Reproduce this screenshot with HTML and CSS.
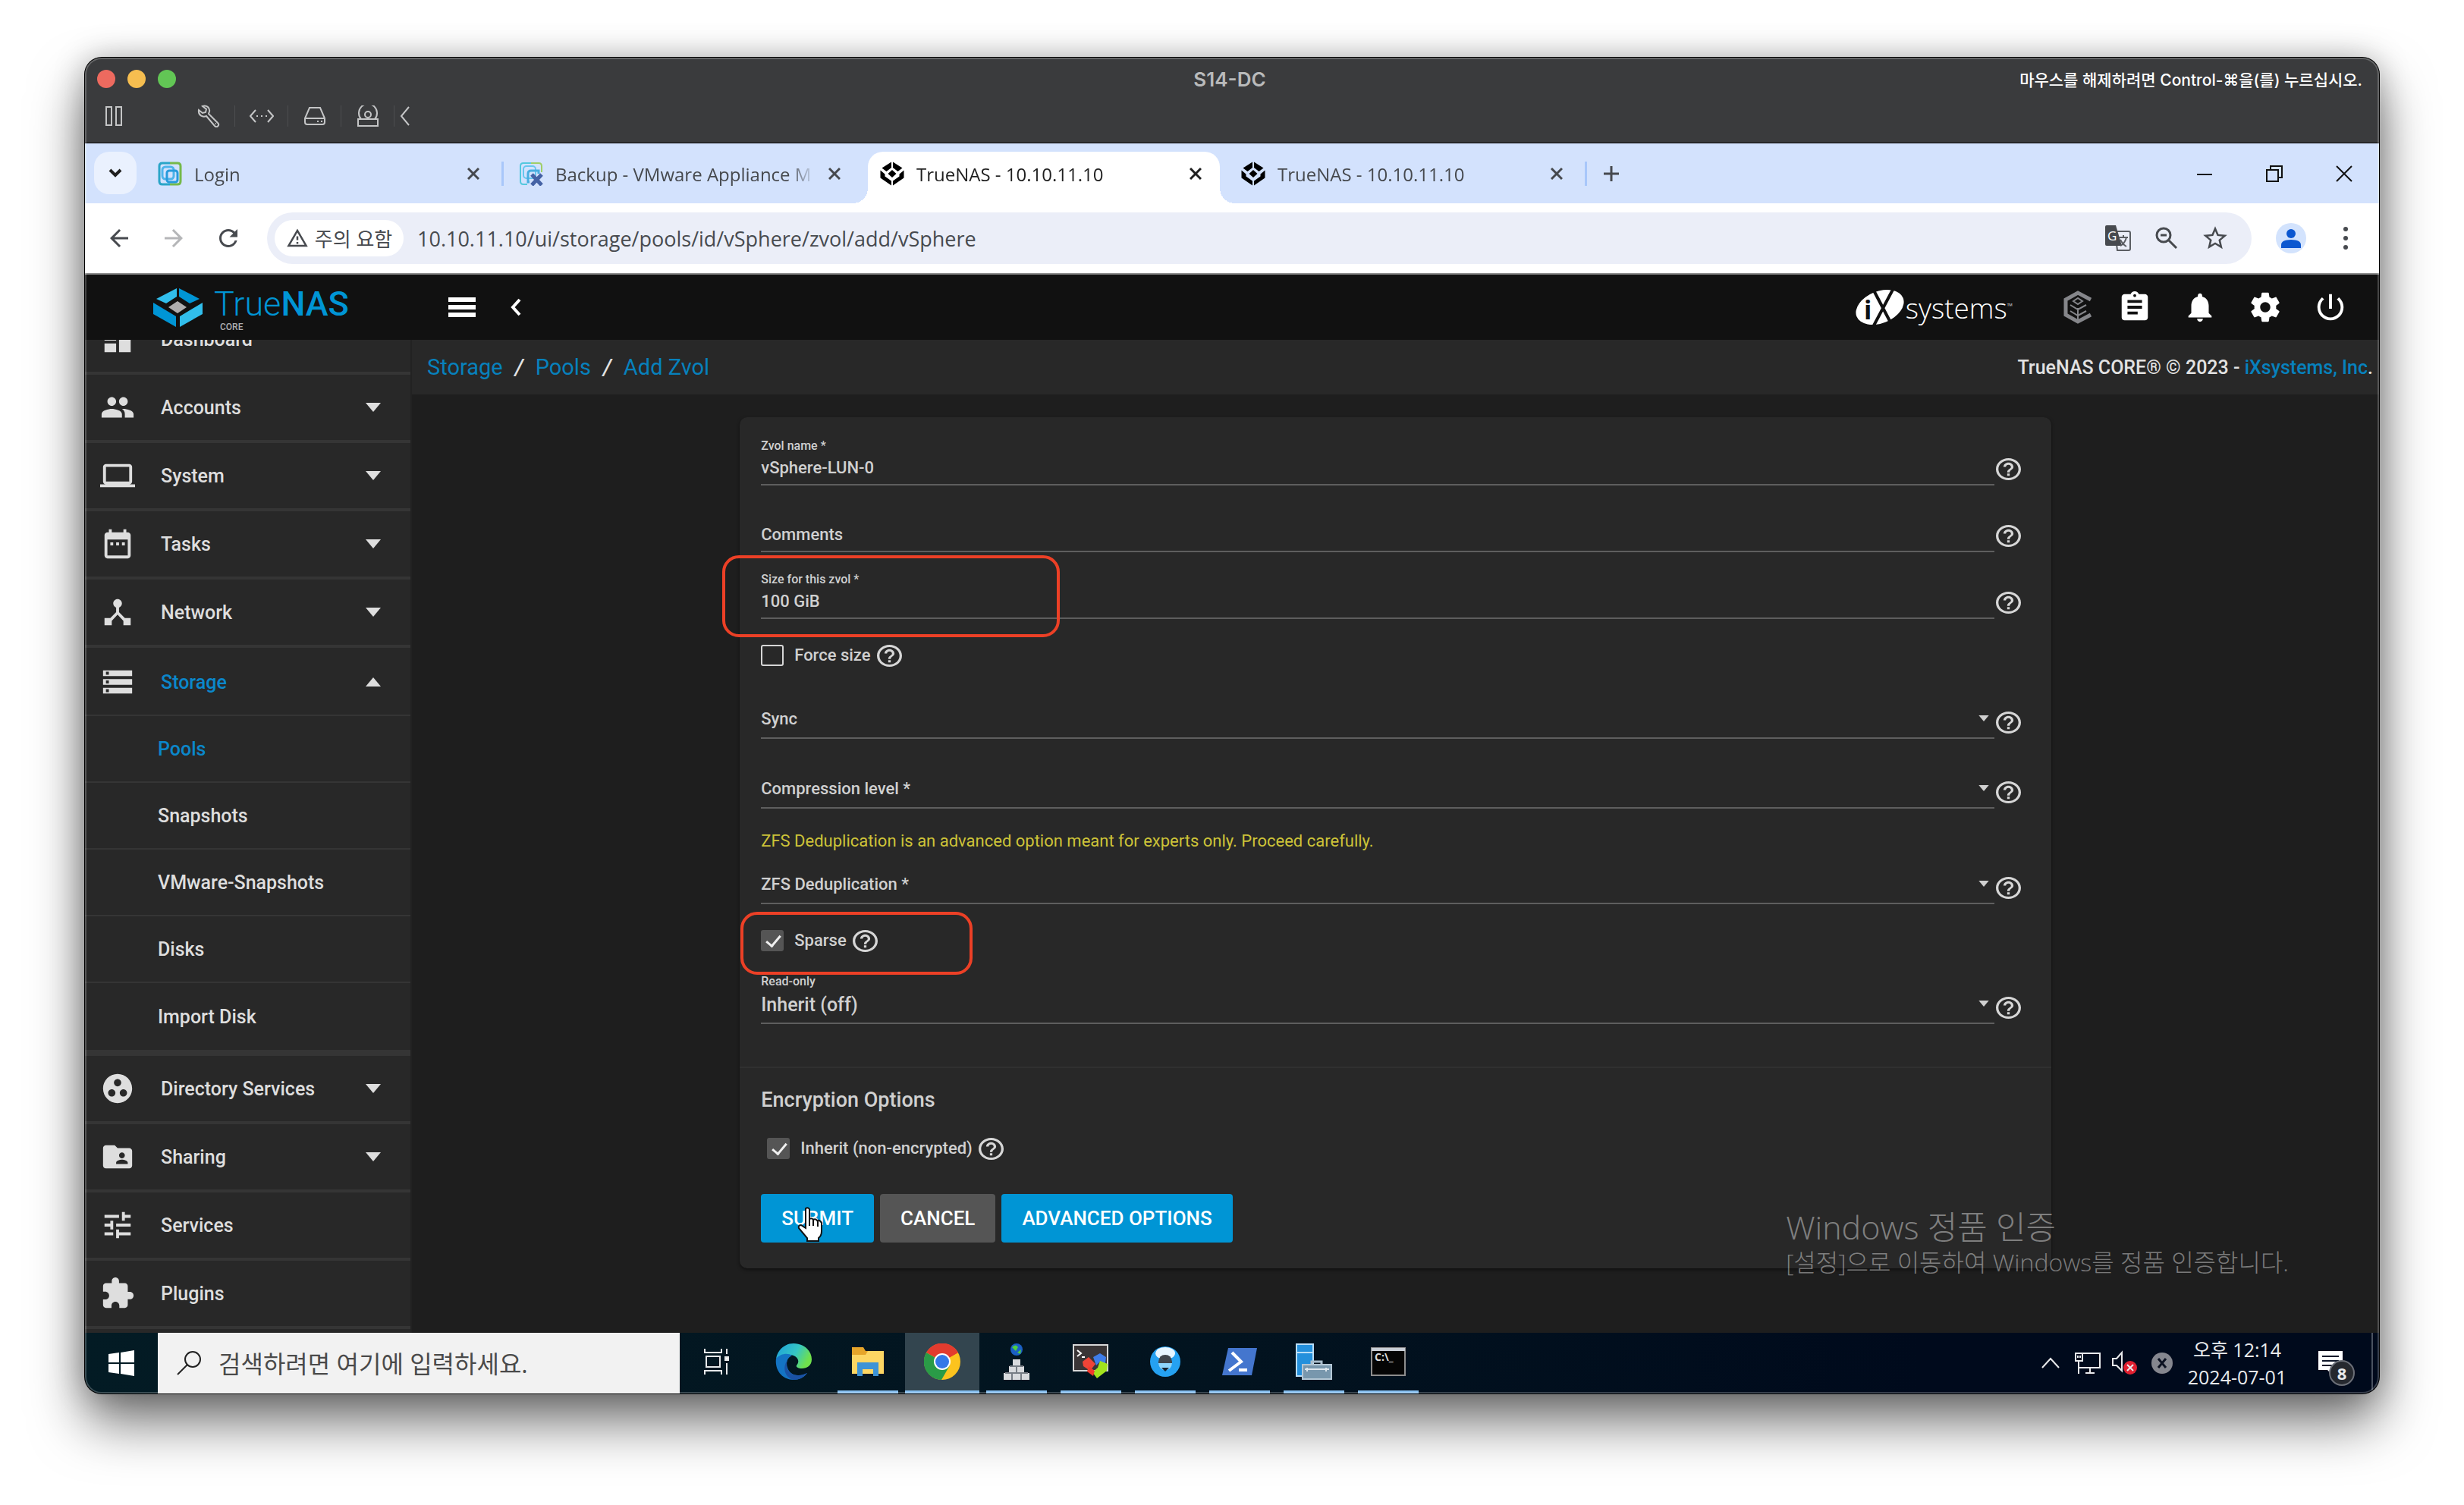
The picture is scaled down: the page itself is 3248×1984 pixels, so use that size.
FILE: index.html
```html
<!DOCTYPE html>
<html lang="ko">
<head>
    <meta charset="UTF-8">
    <meta name="viewport" content="width=device-width, initial-scale=1.0">
    <title>S14-DC</title>
    <link rel="stylesheet" href="styles.css">
</head>
<body>
    <!-- shared icons -->
    <svg class="defs" aria-hidden="true">
        <symbol id="help" viewBox="2 2 20 20" preserveAspectRatio="none"><path d="M11 18h2v-2h-2v2zm1-16C6.48 2 2 6.48 2 12s4.48 10 10 10 10-4.480 10-10S17.520 2 12 2zm0 18c-4.410 0-8-3.590-8-8s3.590-8 8-8 8 3.590 8 8-3.590 8-8 8zm0-14c-2.210 0-4 1.790-4 4h2c0-1.100.9-2 2-2s2 .9 2 2c0 2-3 1.750-3 5h2c0-2.250 3-2.500 3-5 0-2.210-1.790-4-4-4z"/></symbol>
        <symbol id="down" viewBox="0 0 20 12"><path d="M0 0h20L10 12z"/></symbol>
        <symbol id="up" viewBox="0 0 20 12"><path d="M0 12h20L10 0z"/></symbol>
        <symbol id="close" viewBox="0 0 16 16"><path d="M1 1l14 14M15 1L1 15" fill="none" stroke="currentColor" stroke-width="3"/></symbol>
        <symbol id="cube" viewBox="0 0 64 64"><path d="M30 1v15L17 26 5 17zM34 1v15l13 10 12-9zM32 22l11 10-11 10-11-10zM1 23l12 10v6l17 12v12L1 43zM63 23L51 33v6L34 51v12l29-20z"/></symbol>
    </svg>

    <div class="window">
        <header class="titlebar">
            <div class="title-row">
                <div class="lights"><button class="red" aria-label="Close"></button><button class="yellow" aria-label="Minimize"></button><button class="green" aria-label="Zoom"></button></div>
                <h1>S14-DC</h1>
                <p>마우스를 해제하려면 Control-⌘을(를) 누르십시오.</p>
            </div>
            <div class="tools">
                <button class="pause" aria-label="Pause"><svg width="22" height="26" viewBox="0 0 22 26"><path d="M1 1h7v24H1zM14 1h7v24h-7z"/></svg></button>
                <button aria-label="Settings"><svg width="30" height="30" viewBox="0 0 30 30"><path d="M7 2c5-2 10 2 9 7l-1 3 12 12c3 3-1 7-4 4L12 15c-5 2-11-1-10-8l5 4 4-1 1-4z"/><path d="M24 25h1"/></svg></button>
                <button aria-label="Network"><svg width="32" height="18" viewBox="0 0 32 18"><path d="M8 1L1 9l7 8M24 1l7 8-7 8M9 9h2M15 9h2M21 9h2"/></svg></button>
                <button aria-label="Hard disk"><svg width="28" height="24" viewBox="0 0 28 24"><path d="M7 1h14l6 14v5q0 3-3 3H4q-3 0-3-3v-5zM1 15h26M17 19h2M22 19h2"/></svg></button>
                <button aria-label="CD drive"><svg width="28" height="28" viewBox="0 0 28 28"><path d="M5 18a12 12 0 1 1 18 0M1 18h26v9H1z"/><circle cx="14" cy="12" r="4"/></svg></button>
                <button class="collapse" aria-label="Collapse"><svg width="14" height="26" viewBox="0 0 14 26"><path d="M12 1L2 13l10 12"/></svg></button>
            </div>
        </header>

        <!-- browser -->
        <div class="tabstrip">
            <button class="tab-search" aria-label="Search tabs"><svg width="18" height="12" viewBox="0 0 18 12"><path d="M2 2l7 7 7-7" fill="none" stroke="currentColor" stroke-width="4"/></svg></button>
            <div class="tab line">
                <svg width="32" height="32" viewBox="0 0 32 32" fill="none" stroke-width="3"><path d="M16 2H6Q2 2 2 6v20q0 4 4 4h10" stroke="#2aa5c8"/><path d="M16 2h10q4 0 4 4v20q0 4-4 4H16" stroke="#75b94a"/><rect x="6" y="7" width="15" height="16" rx="4" stroke="#4eb4ea"/><rect x="12" y="12" width="14" height="15" rx="3" stroke="#279bdc"/></svg>
                <a href="#">Login</a>
                <button aria-label="Close tab"><svg width="16" height="16"><use href="#close"/></svg></button>
            </div>
            <div class="tab">
                <svg width="32" height="32" viewBox="0 0 32 32" fill="none" stroke-width="2"><path d="M16 2H6Q2 2 2 6v20q0 4 4 4h5" stroke="#54c8de"/><path d="M16 2h10q4 0 4 4v8" stroke="#9fce68"/><rect x="6" y="6" width="16" height="16" rx="4" stroke="#68c6ee"/><path d="M14 27h-2v-11q0-4 4-4h10v4" stroke="#49aee0" stroke-width="3"/><path d="M17 17l13 14M30 17L17 31" stroke="#4562a5" stroke-width="5"/></svg>
                <a href="#">Backup - VMware Appliance M</a>
                <button aria-label="Close tab"><svg width="16" height="16"><use href="#close"/></svg></button>
            </div>
            <div class="tab active">
                <svg width="32" height="32"><use href="#cube"/></svg>
                <a href="#">TrueNAS - 10.10.11.10</a>
                <button aria-label="Close tab"><svg width="16" height="16"><use href="#close"/></svg></button>
            </div>
            <div class="tab line">
                <svg width="32" height="32"><use href="#cube"/></svg>
                <a href="#">TrueNAS - 10.10.11.10</a>
                <button aria-label="Close tab"><svg width="16" height="16"><use href="#close"/></svg></button>
            </div>
            <button class="new-tab" aria-label="New tab"><svg width="22" height="22" viewBox="0 0 22 22"><path d="M11 1v20M1 11h20" stroke="currentColor" stroke-width="3"/></svg></button>
            <div class="win-controls">
                <button aria-label="Minimize"><svg width="20" height="20" viewBox="0 0 20 20"><path d="M0 11h20"/></svg></button>
                <button aria-label="Restore"><svg width="22" height="22" viewBox="0 0 22 22"><path d="M1 6h15v15H1zM6 6V1h15v15h-5"/></svg></button>
                <button aria-label="Close"><svg width="22" height="22" viewBox="0 0 22 22"><path d="M1 1l20 20M21 1L1 21"/></svg></button>
            </div>
        </div>

        <div class="toolbar">
            <button aria-label="Back"><svg width="36" height="36" viewBox="0 0 24 24"><path d="M20 11H7.830l5.590-5.590L12 4l-8 8 8 8 1.410-1.410L7.830 13H20v-2z"/></svg></button>
            <button class="off" aria-label="Forward"><svg width="36" height="36" viewBox="0 0 24 24"><path d="M4 11h12.170l-5.590-5.590L12 4l8 8-8 8-1.410-1.410L16.170 13H4v-2z"/></svg></button>
            <button aria-label="Reload"><svg width="36" height="36" viewBox="0 0 24 24"><path d="M17.650 6.350C16.200 4.900 14.210 4 12 4c-4.420 0-7.990 3.580-7.990 8s3.570 8 7.990 8c3.730 0 6.840-2.550 7.730-6h-2.080c-.82 2.330-3.040 4-5.650 4-3.310 0-6-2.690-6-6s2.690-6 6-6c1.660 0 3.140.69 4.220 1.780L13 11h7V4l-2.350 2.350z"/></svg></button>
            <div class="omnibox">
                <button class="chip"><svg width="30" height="30" viewBox="0 0 24 24"><path d="M12 5.990L19.530 19H4.470L12 5.990M12 2L1 21h22L12 2zm1 14h-2v2h2v-2zm0-6h-2v4h2v-4z"/></svg>주의 요함</button>
                <input type="text" aria-label="Address" value="10.10.11.10/ui/storage/pools/id/vSphere/zvol/add/vSphere">
                <button aria-label="Translate"><svg width="36" height="36" viewBox="0 0 36 36"><path d="M14 9h18q2 0 2 2v21q0 2-2 2H17z" fill="none" stroke="#5b5e63" stroke-width="2"/><path d="M3 1h12l8 27H3q-2 0-2-2V3q0-2 2-2z"/><path d="M19 17h12M25 14v3M29 17q-2 8-8 11M21 20q3 6 8 9" fill="none" stroke="#5b5e63" stroke-width="2"/><text x="4" y="21" font-size="17" fill="#fff">G</text></svg></button>
                <button aria-label="Zoom"><svg width="30" height="30" viewBox="0 0 30 30"><path d="M18 18l10 10M7 11h8" stroke="currentColor" stroke-width="3"/><circle cx="11" cy="11" r="9" fill="none" stroke="currentColor" stroke-width="3"/></svg></button>
                <button aria-label="Bookmark"><svg width="38" height="38" viewBox="0 0 24 24"><path d="M22 9.240l-7.190-.62L12 2 9.190 8.630 2 9.240l5.460 4.730L5.820 21 12 17.270 18.180 21l-1.630-7.030L22 9.240zM12 15.400l-3.760 2.270 1-4.280-3.320-2.880 4.380-.38L12 6.100l1.710 4.040 4.380.38-3.320 2.880 1 4.280L12 15.400z"/></svg></button>
            </div>
            <button class="avatar" aria-label="Profile"><svg width="26" height="26" viewBox="0 0 26 26"><circle cx="13" cy="7" r="6"/><path d="M0 26v-4q0-7 13-7t13 7v4z"/></svg></button>
            <button class="more" aria-label="Menu"><svg width="6" height="30" viewBox="0 0 6 30"><circle cx="3" cy="3" r="3"/><circle cx="3" cy="15" r="3"/><circle cx="3" cy="27" r="3"/></svg></button>
        </div>

        <!-- TrueNAS -->
        <div class="nas-header">
            <a class="logo" href="#">
                <svg width="65" height="51" viewBox="0 0 65 51"><path d="M31 0v11L17 20 4 14z" fill="#31beec"/><path d="M34 0v11l14 9 13-6z" fill="#0095d5"/><path d="M0 19l30 18v14L0 34z" fill="#0095d5"/><path d="M65 19L35 37v14l30-17z" fill="#31beec"/><path d="M32 17l12 8-12 8-12-8z" fill="#aeadae"/></svg>
                <span class="logo-text"><span>True<b>NAS</b></span><small>CORE</small></span>
            </a>
            <button class="menu" aria-label="Toggle menu"><svg width="36" height="26" viewBox="0 0 36 26"><path d="M0 0h36v6H0zM0 10h36v6H0zM0 20h36v6H0z"/></svg></button>
            <button class="mini" aria-label="Collapse menu"><svg width="16" height="24" viewBox="0 0 16 24"><path d="M13 2L4 12l9 10" fill="none" stroke="currentColor" stroke-width="4"/></svg></button>
            <a class="ix" href="#">
                <svg width="64" height="48" viewBox="0 0 64 48"><ellipse cx="32" cy="24" rx="33" ry="21" transform="rotate(-22 32 24)"/><path d="M24 2l22 42M50 -1L23 50" stroke="#111" stroke-width="4"/><text x="11" y="40" font-size="34" font-weight="bold" fill="#111">i</text></svg>
                <span>systems<sup>™</sup></span>
            </a>
            <button class="tc" aria-label="TrueCommand"><svg width="38" height="44" viewBox="0 0 38 44" fill="none" stroke="currentColor" stroke-width="5"><path d="M36 12L19 3 3 12v20l16 9 17-9"/><path d="M9 19l10 6 11-6M9 27l10 6 11-6M19 23v17M13 14l6-4 6 4-6 4z" stroke-width="2"/></svg></button>
            <button aria-label="Tasks"><svg width="46" height="46" viewBox="0 0 24 24"><path d="M19 3h-4.180C14.400 1.840 13.300 1 12 1c-1.300 0-2.400.84-2.820 2H5c-1.100 0-2 .9-2 2v14c0 1.100.9 2 2 2h14c1.100 0 2-.9 2-2V5c0-1.100-.9-2-2-2zm-7 0c.55 0 1 .45 1 1s-.45 1-1 1-1-.45-1-1 .45-1 1-1zm2 14H7v-2h7v2zm3-4H7v-2h10v2zm0-4H7V7h10v2z"/></svg></button>
            <button aria-label="Alerts"><svg width="46" height="46" viewBox="0 0 24 24"><path d="M12 22c1.100 0 2-.9 2-2h-4c0 1.100.89 2 2 2zm6-6v-5c0-3.070-1.640-5.640-4.500-6.320V4c0-.83-.67-1.500-1.500-1.500s-1.500.67-1.500 1.500v.68C7.630 5.360 6 7.920 6 11v5l-2 2v1h16v-1l-2-2z"/></svg></button>
            <button aria-label="Settings"><svg width="46" height="46" viewBox="0 0 24 24"><path d="M19.430 12.980c.04-.32.07-.64.07-.98s-.03-.66-.07-.98l2.110-1.650c.19-.15.24-.42.12-.64l-2-3.460c-.12-.22-.39-.3-.61-.22l-2.490 1c-.52-.4-1.080-.73-1.690-.98l-.38-2.650C14.460 2.180 14.250 2 14 2h-4c-.25 0-.46.18-.49.42l-.38 2.650c-.61.25-1.170.59-1.690.98l-2.490-1c-.23-.09-.49 0-.61.22l-2 3.460c-.13.22-.07.49.12.64l2.110 1.650c-.04.32-.07.65-.07.98s.03.66.07.98l-2.110 1.650c-.19.15-.24.42-.12.64l2 3.460c.12.22.39.3.61.22l2.490-1c.52.4 1.080.73 1.690.98l.38 2.650c.03.24.24.42.49.42h4c.25 0 .46-.18.49-.42l.38-2.650c.61-.25 1.170-.59 1.690-.98l2.490 1c.23.09.49 0 .61-.22l2-3.460c.12-.22.07-.49-.12-.64l-2.110-1.650zM12 15.500c-1.930 0-3.500-1.570-3.500-3.500s1.570-3.500 3.500-3.500 3.500 1.570 3.500 3.500-1.570 3.500-3.500 3.500z"/></svg></button>
            <button aria-label="Power"><svg width="46" height="46" viewBox="0 0 24 24"><path d="M13 3h-2v10h2V3zm4.830 2.170l-1.420 1.420C17.990 7.860 19 9.810 19 12c0 3.870-3.130 7-7 7s-7-3.130-7-7c0-2.190 1.010-4.140 2.580-5.420L6.170 5.170C4.230 6.820 3 9.260 3 12c0 4.970 4.030 9 9 9s9-4.030 9-9c0-2.740-1.230-5.180-3.170-6.830z"/></svg></button>
        </div>

        <div class="nas-body">
            <nav class="sidebar">
                <a class="item first" href="#"><svg class="ico" viewBox="0 0 24 24"><path d="M3 13h8V3H3v10zm0 8h8v-6H3v6zm10 0h8V11h-8v10zm0-18v6h8V3h-8z"/></svg><span>Dashboard</span></a>
                <button class="item"><svg class="ico" viewBox="0 0 24 24"><path d="M16 11c1.660 0 2.990-1.340 2.990-3S17.660 5 16 5c-1.660 0-3 1.340-3 3s1.340 3 3 3zm-8 0c1.660 0 2.990-1.340 2.990-3S9.660 5 8 5C6.340 5 5 6.340 5 8s1.340 3 3 3zm0 2c-2.330 0-7 1.170-7 3.500V19h14v-2.500c0-2.330-4.670-3.500-7-3.500zm8 0c-.29 0-.62.02-.97.05 1.160.84 1.970 1.970 1.970 3.450V19h6v-2.500c0-2.330-4.670-3.500-7-3.500z"/></svg><span>Accounts</span><svg class="caret"><use href="#down"/></svg></button>
                <button class="item"><svg class="ico" viewBox="0 0 24 24"><path d="M20 18c1.100 0 1.990-.9 1.990-2L22 6c0-1.100-.9-2-2-2H4c-1.100 0-2 .9-2 2v10c0 1.100.9 2 2 2H0v2h24v-2h-4zM4 6h16v10H4V6z"/></svg><span>System</span><svg class="caret"><use href="#down"/></svg></button>
                <button class="item"><svg class="ico" viewBox="0 0 24 24"><path d="M9 11H7v2h2v-2zm4 0h-2v2h2v-2zm4 0h-2v2h2v-2zm2-7h-1V2h-2v2H8V2H6v2H5c-1.110 0-1.990.9-1.990 2L3 20c0 1.100.89 2 2 2h14c1.100 0 2-.9 2-2V6c0-1.100-.9-2-2-2zm0 16H5V9h14v11z"/></svg><span>Tasks</span><svg class="caret"><use href="#down"/></svg></button>
                <button class="item"><svg class="ico" viewBox="0 0 24 24"><path d="M17 16l-4-4V8.820C14.160 8.400 15 7.300 15 6c0-1.660-1.340-3-3-3S9 4.340 9 6c0 1.300.84 2.400 2 2.820V12l-4 4H3v5h5v-3.050l4-4.200 4 4.200V21h5v-5h-4z"/></svg><span>Network</span><svg class="caret"><use href="#down"/></svg></button>
                <div class="group">
                    <button class="item current"><svg class="ico" viewBox="0 0 24 24"><path d="M2 20h20v-4H2v4zm2-3h2v2H4v-2zM2 4v4h20V4H2zm4 3H4V5h2v2zm-4 7h20v-4H2v4zm2-3h2v2H4v-2z"/></svg><span>Storage</span><svg class="caret"><use href="#up"/></svg></button>
                    <a class="sub current" href="#">Pools</a>
                    <a class="sub" href="#">Snapshots</a>
                    <a class="sub" href="#">VMware-Snapshots</a>
                    <a class="sub" href="#">Disks</a>
                    <a class="sub" href="#">Import Disk</a>
                </div>
                <button class="item"><svg class="ico" viewBox="0 0 24 24"><path d="M12 2C6.480 2 2 6.480 2 12s4.480 10 10 10 10-4.480 10-10S17.520 2 12 2zM8 17.500c-1.380 0-2.500-1.120-2.500-2.500s1.120-2.500 2.500-2.500 2.500 1.120 2.500 2.500-1.120 2.500-2.500 2.500zM9.500 8c0-1.380 1.120-2.500 2.500-2.500s2.500 1.120 2.500 2.500-1.120 2.500-2.500 2.500S9.500 9.380 9.500 8zm6.500 9.500c-1.380 0-2.500-1.120-2.500-2.500s1.120-2.500 2.500-2.500 2.500 1.120 2.500 2.500-1.120 2.500-2.500 2.500z"/></svg><span>Directory Services</span><svg class="caret"><use href="#down"/></svg></button>
                <button class="item"><svg class="ico" viewBox="0 0 24 24"><path d="M20 6h-8l-2-2H4c-1.100 0-1.990.9-1.990 2L2 18c0 1.100.9 2 2 2h16c1.100 0 2-.9 2-2V8c0-1.100-.9-2-2-2zm-5 3c1.100 0 2 .9 2 2s-.9 2-2 2-2-.9-2-2 .9-2 2-2zm4 8h-8v-1c0-1.330 2.670-2 4-2s4 .67 4 2v1z"/></svg><span>Sharing</span><svg class="caret"><use href="#down"/></svg></button>
                <a class="item" href="#"><svg class="ico" viewBox="0 0 24 24"><path d="M3 17v2h6v-2H3zM3 5v2h10V5H3zm10 16v-2h8v-2h-8v-2h-2v6h2zM7 9v2H3v2h4v2h2V9H7zm14 4v-2H11v2h10zm-6-4h2V7h4V5h-4V3h-2v6z"/></svg><span>Services</span></a>
                <a class="item" href="#"><svg class="ico" viewBox="0 0 24 24"><path d="M20.500 11H19V7c0-1.100-.9-2-2-2h-4V3.500C13 2.120 11.880 1 10.500 1S8 2.120 8 3.500V5H4c-1.100 0-1.990.9-1.990 2v3.800H3.500c1.490 0 2.700 1.210 2.700 2.700s-1.210 2.700-2.700 2.700H2V20c0 1.100.9 2 2 2h3.800v-1.500c0-1.490 1.210-2.700 2.700-2.700 1.490 0 2.700 1.210 2.700 2.700V22H17c1.100 0 2-.9 2-2v-4h1.500c1.380 0 2.500-1.120 2.500-2.500S21.880 11 20.500 11z"/></svg><span>Plugins</span></a>
            </nav>

            <main>
                <div class="crumbs">
                    <a href="#">Storage</a><i>/</i><a href="#">Pools</a><i>/</i><a href="#">Add Zvol</a>
                    <p>TrueNAS CORE® © 2023 - <a href="#">iXsystems, Inc</a>.</p>
                </div>

                <form class="card">
                    <div class="fields">
                        <div class="field">
                            <div class="control"><label for="name">Zvol name *</label><input type="text" id="name" value="vSphere-LUN-0"></div>
                            <svg class="help"><use href="#help"/></svg>
                        </div>
                        <div class="field empty">
                            <div class="control"><label for="comments">Comments</label><input type="text" id="comments"></div>
                            <svg class="help"><use href="#help"/></svg>
                        </div>
                        <div class="field">
                            <div class="control"><label for="size">Size for this zvol *</label><input type="text" id="size" value="100 GiB"></div>
                            <svg class="help"><use href="#help"/></svg>
                            <div class="mark mark-size"></div>
                        </div>
                        <div class="check">
                            <input type="checkbox" id="force"><label for="force">Force size</label><svg class="help"><use href="#help"/></svg>
                        </div>
                        <div class="field choice empty">
                            <div class="control"><label for="sync">Sync</label><select id="sync"><option></option></select><svg class="arrow"><use href="#down"/></svg></div>
                            <svg class="help"><use href="#help"/></svg>
                        </div>
                        <div class="field choice empty">
                            <div class="control"><label for="compression">Compression level *</label><select id="compression"><option></option></select><svg class="arrow"><use href="#down"/></svg></div>
                            <svg class="help"><use href="#help"/></svg>
                        </div>
                        <p class="warning">ZFS Deduplication is an advanced option meant for experts only. Proceed carefully.</p>
                        <div class="field choice empty compact">
                            <div class="control"><label for="dedup">ZFS Deduplication *</label><select id="dedup"><option></option></select><svg class="arrow"><use href="#down"/></svg></div>
                            <svg class="help"><use href="#help"/></svg>
                        </div>
                        <div class="check">
                            <input type="checkbox" id="sparse" checked><label for="sparse">Sparse</label><svg class="help"><use href="#help"/></svg>
                            <div class="mark mark-sparse"></div>
                        </div>
                        <div class="field choice">
                            <div class="control"><label for="readonly">Read-only</label><select id="readonly"><option>Inherit (off)</option></select><svg class="arrow"><use href="#down"/></svg></div>
                            <svg class="help"><use href="#help"/></svg>
                        </div>
                    </div>
                    <div class="encryption">
                        <h2>Encryption Options</h2>
                        <div class="check indent">
                            <input type="checkbox" id="inherit" checked><label for="inherit">Inherit (non-encrypted)</label><svg class="help"><use href="#help"/></svg>
                        </div>
                        <div class="actions">
                            <button type="button" class="primary">SUBMIT
                                <svg class="cursor" width="36" height="48" viewBox="0 0 36 48"><path d="M11 3q3-2 5 1v13q3-2 5 1 3-2 5 1 4-1 6 3v11q0 6-4 9v4H13v-4L2 29q-1-4 3-4l6 4z" fill="#fff" stroke="#111" stroke-width="2"/><path d="M16 17v9M21 18v8M27 20v7" stroke="#111" stroke-width="2"/></svg>
                            </button>
                            <button type="button">CANCEL</button>
                            <button type="button" class="primary">ADVANCED OPTIONS</button>
                        </div>
                    </div>
                </form>

                <div class="watermark"><strong>Windows 정품 인증</strong><span>[설정]으로 이동하여 Windows를 정품 인증합니다.</span></div>
            </main>
        </div>

        <!-- Windows taskbar -->
        <footer class="taskbar">
            <button class="start" aria-label="Start"><svg width="34" height="34" viewBox="0 0 34 34" fill="#fff"><path d="M0 5l14-2v13H0zM16 3l18-3v16H16zM0 18h14v13L0 29zM16 18h18v16l-18-3z"/></svg></button>
            <label class="search"><svg width="34" height="34" viewBox="0 0 34 34" fill="none" stroke="#222" stroke-width="2"><circle cx="22" cy="12" r="10"/><path d="M15 19L2 32"/></svg><input type="text" aria-label="Search" placeholder="검색하려면 여기에 입력하세요."></label>
            <button class="app taskview" aria-label="Task view"><svg width="34" height="36" viewBox="0 0 34 36" fill="none" stroke="#e6e9ea" stroke-width="2"><path d="M3 11h18v14H3zM1 1v5h22V1M1 35v-5h22v5M30 1v7M30 20v15"/><path d="M28 12h4v4h-4z" fill="#fff"/></svg></button>
            <button class="app" aria-label="Edge">
                <svg width="48" height="48" viewBox="0 0 48 48"><defs><linearGradient id="edge" x2="1" y2=".4"><stop stop-color="#1d9fdc"/><stop offset=".6" stop-color="#35c6c4"/><stop offset="1" stop-color="#6fe04c"/></linearGradient></defs><path d="M1 20C3 8 13 0 24 0c14 0 24 10 24 21 0 8-6 12-13 12-5 0-8-2-7-4 6-7-1-14-9-14C11 15 4 18 1 20z" fill="url(#edge)"/><path d="M1 20c6-7 16-8 21-4-7 3-8 10-6 16 3 9 14 14 26 7-4 6-11 9-18 9C9 48-1 35 1 20z" fill="#1474c4"/><path d="M16 22c-5 13 7 26 26 17-5 7-12 9-18 9-12-3-15-17-8-26z" fill="#1a52a5"/></svg>
            </button>
            <button class="app open" aria-label="File Explorer"><svg width="44" height="38" viewBox="0 0 44 38"><path d="M1 0h15l3 5h24v30H1z" fill="#e6a52a"/><path d="M1 10h18l3-5h21v30H1z" fill="#fdd663"/><path d="M8 38V20h28v18h-7v-9H15v9z" fill="#3d93d6"/></svg></button>
            <button class="app open active" aria-label="Chrome"><svg width="48" height="48" viewBox="0 0 48 48"><circle cx="24" cy="24" r="24" fill="#fcc31e"/><path d="M24 24L3 12A24 24 0 0 1 45 12z" fill="#e33b2e"/><path d="M3 12a24 24 0 0 0 20 36l11-19-10-5z" fill="#2a9b47"/><path d="M24 12h21L24 24z" fill="#e33b2e"/><circle cx="24" cy="24" r="11" fill="#fff"/><circle cx="24" cy="24" r="9" fill="#3478e8"/></svg></button>
            <button class="app open" aria-label="Network tool"><svg width="36" height="48" viewBox="0 0 36 48"><circle cx="18" cy="8" r="8" fill="#1b5fc4"/><path d="M12 5q5-5 8 0l-3 5zM19 12l5-4-1 6z" fill="#4fcf3f"/><path d="M13 21h10v9h5v9h7v9H1v-9h7v-9h5z" fill="#d8dadd"/><path d="M9 30h18M3 39h30M18 30v9M12 39v9M24 39v9" stroke="#777d85" stroke-width="2"/></svg></button>
            <button class="app open" aria-label="Terminal"><svg width="48" height="46" viewBox="0 0 48 46"><path d="M1 1h45v34H1z" fill="#3a3536" stroke="#d7d7d7" stroke-width="2"/><path d="M6 8l5 4-5 4M12 17h4" fill="none" stroke="#fff" stroke-width="2"/><path d="M13 23l8-6 9 9-7 9-9-6z" fill="#ef4437"/><path d="M27 17l9-5 8 5-1 9-7-3-5 5z" fill="#3f7de8"/><path d="M36 22l10 4-1 9-13 10-6-8 7-6z" fill="#a2e31d"/><path d="M21 29l8 6-2 7-8-6z" fill="#f13a2d"/></svg></button>
            <button class="app open" aria-label="Client"><svg width="40" height="40" viewBox="0 0 40 40"><circle cx="20" cy="20" r="20" fill="#25a1f1"/><ellipse cx="20" cy="9" rx="13" ry="8" fill="#e8f6ff"/><path d="M11 20q1-9 9-9t9 9v2H11z" fill="#40464c"/><path d="M11 22h18q-1 9-9 9t-9-9z" fill="#8fd6fb"/><path d="M15 28h10l-5 5z" fill="#152533"/></svg></button>
            <button class="app open" aria-label="PowerShell"><svg width="48" height="36" viewBox="0 0 48 36"><path d="M9 0h38l-7 36H1z" fill="#4476ce"/><path d="M14 6l12 12-16 12M23 29h11" fill="none" stroke="#fff" stroke-width="4"/></svg></button>
            <button class="app open" aria-label="Server Manager"><svg width="48" height="48" viewBox="0 0 48 48"><path d="M1 1h22v42H1z" fill="#2490dc" stroke="#b9def7" stroke-width="2"/><path d="M1 12h22" stroke="#b9def7" stroke-width="2"/><path d="M21 28v-4h13v4" fill="none" stroke="#a9bdcc" stroke-width="3"/><path d="M9 28h38v19H9z" fill="#7897ad" stroke="#b4c7d5" stroke-width="2"/><path d="M12 34h32M15 32v5M40 32v5" stroke="#dce6ed" stroke-width="2"/></svg></button>
            <button class="app open" aria-label="Command Prompt"><svg width="46" height="38" viewBox="0 0 46 38"><path d="M1 1h44v36H1z" fill="#050505" stroke="#8d8d8d" stroke-width="2"/><path d="M1 1h44v4H1z" fill="#c9ced6"/><text x="5" y="18" font-size="14" font-weight="bold" fill="#ddd">C:\_</text></svg></button>

            <div class="tray">
                <button aria-label="Hidden icons"><svg width="26" height="16" viewBox="0 0 26 16"><path d="M2 14L13 2l11 12"/></svg></button>
                <button aria-label="Network"><svg width="34" height="30" viewBox="0 0 34 30"><path d="M10 2h23v19H6M1 2h9v10H1zM5 12v17M14 28h12M20 21v7M4 5v3M7 5v3"/></svg></button>
                <button aria-label="Volume"><svg width="34" height="34" viewBox="0 0 34 34"><path d="M1 11h5l7-8v24l-7-7H1z"/><circle cx="24" cy="23" r="9" fill="#e02030" stroke="none"/><path d="M20 19l8 8M28 19l-8 8"/></svg></button>
                <button aria-label="Status"><svg width="30" height="30" viewBox="0 0 30 30"><circle cx="15" cy="15" r="14" fill="#85878f" stroke="none"/><path d="M10 9l10 12M20 9L10 21" stroke="#0c1222" stroke-width="3"/></svg></button>
                <time>오후 12:14<br>2024-07-01</time>
                <button class="notify" aria-label="Notifications"><svg width="34" height="34" viewBox="0 0 34 34"><path d="M1 1h32v25H20v7l-7-7H1z" fill="#fff" stroke="none"/><path d="M6 8h22M6 14h22M6 20h14" stroke="#10182a"/></svg><span>8</span></button>
            </div>
        </footer>
    </div>
</body>
</html>
```
FILE: styles.css
```css
* {
    box-sizing: border-box;
}
body {
    display: flex;
    min-height: 100vh;
    margin: 0;
    padding: 76px 112px 147px;
    background-color: #ffffff;
    font-family: Roboto, "Noto Sans CJK KR", sans-serif;
    overflow: hidden;
}
.defs {
    position: absolute;
    width: 0;
    height: 0;
}
h1, h2, p {
    margin: 0;
}
a {
    color: inherit;
    text-decoration: none;
}
button, input, select {
    margin: 0;
    padding: 0;
    border: none;
    outline: none;
    background: none;
    color: inherit;
    font: inherit;
}
button {
    display: flex;
    justify-content: center;
    align-items: center;
    cursor: pointer;
}
svg {
    flex: none;
}
svg:not([fill]) {
    fill: currentColor;
}
.window {
    position: relative;
    flex: 1;
    display: flex;
    flex-direction: column;
    min-width: 0;
    border-radius: 22px;
    overflow: hidden;
    background-color: #1e1e1e;
    box-shadow: 0 0 0 1px #000000, 0 0 40px rgba(0, 0, 0, 0.25), 0 38px 70px rgba(0, 0, 0, 0.55);
}
.window::after {
    content: "";
    position: absolute;
    inset: 0;
    border: 2px solid rgba(255, 255, 255, 0.22);
    border-radius: 22px;
    pointer-events: none;
}

/* title bar */
.titlebar {
    height: 113px;
    background-color: #3a3b3d;
    border-bottom: 1px solid #000000;
}
.title-row {
    display: grid;
    grid-template-columns: 1fr auto 1fr;
    align-items: center;
    height: 56px;
    padding: 0 22px 0 16px;
    font-family: Inter, "Noto Sans CJK KR", sans-serif;
}
.title-row h1 {
    color: #b9babb;
    font-size: 26px;
    font-weight: 600;
}
.title-row p {
    justify-self: end;
    color: #ffffff;
    font-size: 21px;
    font-weight: 500;
}
.lights {
    display: flex;
    gap: 16px;
}
.lights button {
    width: 24px;
    height: 24px;
    border-radius: 50%;
}
.red {
    background-color: #ed6a5f;
}
.yellow {
    background-color: #f6be50;
}
.green {
    background-color: #62c655;
}
.tools {
    display: flex;
    height: 42px;
    align-items: center;
    color: #c4c5c6;
}
.tools button {
    width: 70px;
    height: 28px;
    border-right: 1px solid #4c4d4f;
}
.tools .pause {
    width: 76px;
    margin-right: 52px;
    border: none;
}
.tools .collapse {
    width: 28px;
    border: none;
}
.tools svg {
    fill: none;
    stroke: currentColor;
    stroke-width: 2;
}

/* browser */
.tabstrip {
    display: flex;
    gap: 12px;
    height: 79px;
    padding: 11px 0 0 12px;
    background-color: #d3e2fd;
    color: #46494e;
    font-family: "Open Sans", "Noto Sans CJK KR", sans-serif;
    font-size: 24px;
}
.tab-search {
    width: 56px;
    height: 56px;
    border-radius: 20px;
    background-color: #eaf1fe;
    color: #1f1f1f;
}
.tab {
    position: relative;
    flex: 0 1 464px;
    display: flex;
    align-items: center;
    gap: 16px;
    min-width: 0;
    padding: 0 22px 10px 16px;
}
.tab a {
    flex: 1;
    overflow: hidden;
    white-space: nowrap;
    -webkit-mask-image: linear-gradient(to right, #000 90%, transparent);
    mask-image: linear-gradient(to right, #000 90%, transparent);
}
.tab button {
    width: 20px;
    height: 20px;
}
.tab > svg {
    color: #000000;
}
.tab.line::after {
    content: "";
    position: absolute;
    right: -8px;
    top: 13px;
    width: 3px;
    height: 32px;
    background-color: #a8c7fa;
}
.tab.active {
    border-radius: 20px 20px 0 0;
    background-color: #ffffff;
    color: #1f1f1f;
}
.tab.active::before, .tab.active::after {
    content: "";
    position: absolute;
    bottom: 0;
    width: 20px;
    height: 20px;
}
.tab.active::before {
    left: -20px;
    background: radial-gradient(circle at top left, transparent 20px, #ffffff 20px);
}
.tab.active::after {
    right: -20px;
    background: radial-gradient(circle at top right, transparent 20px, #ffffff 20px);
}
.new-tab {
    width: 56px;
    height: 58px;
}
.win-controls {
    display: flex;
    margin-left: auto;
}
.win-controls button {
    width: 92px;
    height: 58px;
}
.win-controls svg {
    fill: none;
    stroke: #111111;
    stroke-width: 2;
}
.toolbar {
    display: flex;
    align-items: center;
    height: 94px;
    padding: 0 26px 0 9px;
    border-bottom: 2px solid #8c8c8c;
    background-color: #ffffff;
    color: #474a4f;
    font-family: "Open Sans", "Noto Sans CJK KR", sans-serif;
}
.toolbar button {
    width: 72px;
    height: 48px;
}
.toolbar .off {
    color: #b5b6b8;
}
.omnibox {
    flex: 1;
    display: flex;
    align-items: center;
    height: 68px;
    margin-left: 15px;
    padding: 0 16px 0 10px;
    border-radius: 34px;
    background-color: #ebeef8;
}
.omnibox button {
    width: 64px;
}
.omnibox .chip {
    gap: 8px;
    width: 170px;
    border-radius: 24px;
    background-color: #ffffff;
    font-size: 26px;
}
.omnibox input {
    flex: 1;
    margin-left: 18px;
    font-size: 27px;
}
.toolbar .avatar {
    width: 40px;
    height: 40px;
    margin-left: 32px;
    border-radius: 50%;
    background-color: #d3e3fd;
    color: #0b57d0;
}
.toolbar .more {
    width: 36px;
    margin-left: 34px;
}

/* TrueNAS header */
.nas-header {
    display: flex;
    align-items: center;
    height: 86px;
    padding-right: 21px;
    background-color: #111111;
    color: #ffffff;
}
.nas-header button {
    width: 86px;
    height: 86px;
}
.logo {
    display: flex;
    align-items: center;
    gap: 15px;
    width: 431px;
    padding-left: 90px;
    color: #0095d5;
}
.logo-text {
    display: flex;
    flex-direction: column;
    padding-top: 4px;
    font-size: 45px;
    font-weight: 300;
    line-height: 48px;
}
.logo-text b {
    font-weight: 500;
}
.logo-text small {
    padding-left: 8px;
    color: #aeadae;
    font-size: 12px;
    font-weight: 500;
    line-height: 12px;
}
.nas-header .menu {
    margin-left: 23px;
}
.nas-header .mini {
    width: 56px;
}
.ix {
    display: flex;
    align-items: center;
    gap: 2px;
    margin-left: auto;
    margin-right: 54px;
    font-family: "Open Sans", sans-serif;
    font-size: 37px;
    font-weight: 300;
}
.ix sup {
    font-size: 10px;
}
.nas-header .tc {
    width: 64px;
    color: #85868a;
}

/* sidebar */
.nas-body {
    flex: 1;
    display: flex;
    min-height: 0;
}
.sidebar {
    width: 431px;
    overflow: hidden;
    border-right: 2px solid #222222;
    background-color: #282828;
    color: #dedede;
    font-size: 25px;
    font-weight: 500;
}
.item {
    display: flex;
    justify-content: flex-start;
    align-items: center;
    width: 100%;
    height: 90px;
    padding: 0 39px 0 20px;
    border-bottom: 4px solid #353535;
}
.item.first {
    margin-top: -44px;
}
.item span {
    flex: 1;
    padding-left: 34px;
    text-align: left;
}
.ico {
    width: 46px;
    height: 46px;
}
.caret {
    width: 20px;
    height: 12px;
}
.group {
    padding-top: 2px;
    border-bottom: 8px solid #353535;
}
.group .item {
    height: 88px;
    border-bottom-width: 2px;
}
.sub {
    display: flex;
    align-items: center;
    height: 88px;
    padding-left: 96px;
    border-bottom: 2px solid #353535;
}
.sub:last-child {
    border-bottom: none;
}
.current span, .sub.current {
    color: #0b87cb;
}

/* page */
main {
    position: relative;
    flex: 1;
    display: flex;
    flex-direction: column;
    align-items: center;
    min-width: 0;
    color: #d0d0d0;
}
.crumbs {
    display: flex;
    align-items: center;
    width: 100%;
    height: 72px;
    padding: 0 8px 0 20px;
    background-color: #282828;
    color: #e2e2e2;
    font-size: 29px;
}
.crumbs a {
    color: #0781bd;
}
.crumbs i {
    padding: 0 16px;
    font-weight: 500;
}
.crumbs p {
    margin-left: auto;
    font-size: 25px;
    font-weight: 500;
}
.card {
    width: 66.66%;
    margin-top: 30px;
    border-radius: 10px;
    background-color: #282828;
    box-shadow: 0 2px 4px rgba(0, 0, 0, 0.5);
    font-size: 22px;
    font-weight: 500;
}
.fields {
    padding: 2px 40px 56px 28px;
    border-bottom: 2px solid #303030;
}
.field {
    position: relative;
    display: flex;
    gap: 2px;
}
.control {
    flex: 1;
    display: grid;
    grid-template-rows: 22px 36px;
    align-items: center;
    padding: 24px 0 4px;
    border-bottom: 2px solid #5e5e5e;
}
.control label {
    grid-area: 1 / 1;
    font-size: 16px;
}
.control input, .control select {
    grid-area: 2 / 1;
    width: 100%;
    height: 36px;
}
.empty .control label {
    grid-area: 2 / 1;
    font-size: 22px;
}
.choice .control {
    grid-template-rows: 22px 38px;
    padding-bottom: 6px;
}
.choice select {
    appearance: none;
    padding-top: 2px;
    font-size: 25px;
}
.compact .control {
    padding-top: 0;
}
.arrow {
    grid-area: 2 / 1;
    justify-self: end;
    width: 16px;
    height: 8px;
    margin-right: 6px;
    pointer-events: none;
}
.help {
    width: 33px;
    height: 29px;
    color: #d6d6d6;
}
.field .help {
    align-self: flex-end;
    margin-bottom: 7px;
}
.check {
    position: relative;
    display: flex;
    align-items: center;
    height: 66px;
    padding-top: 30px;
}
.check input {
    appearance: none;
    width: 30px;
    height: 28px;
    border: 2px solid #d6d6d6;
    border-radius: 3px;
}
.check input:checked {
    border-color: #555555;
    background-color: #555555;
}
.check input:checked::after {
    content: "";
    display: block;
    width: 8px;
    height: 16px;
    margin: 1px 0 0 9px;
    border: solid #f0f0f0;
    border-width: 0 3px 3px 0;
    transform: rotate(40deg);
}
.check label {
    padding: 0 8px 2px 14px;
}
.indent {
    padding-left: 8px;
}
.warning {
    padding-top: 28px;
    color: #cdc338;
    font-weight: 400;
    line-height: 30px;
}
/* red annotation boxes */
.mark {
    position: absolute;
    border: 4px solid #ec4026;
    border-radius: 22px;
    pointer-events: none;
}
.mark-size {
    left: -51px;
    top: 4px;
    width: 445px;
    height: 108px;
}
.mark-sparse {
    left: -27px;
    top: 10px;
    width: 306px;
    height: 83px;
}
.encryption {
    padding: 26px 28px 34px;
}
.encryption h2 {
    font-size: 27px;
    font-weight: 500;
    line-height: 32px;
}
.actions {
    display: flex;
    gap: 8px;
    margin-top: 42px;
}
.actions button {
    position: relative;
    height: 64px;
    padding: 0 27px;
    border-radius: 4px;
    background-color: #555555;
    color: #ffffff;
    font-size: 26px;
}
.actions .primary {
    background-color: #0095d5;
}
.cursor {
    position: absolute;
    left: 48px;
    top: 16px;
}
.watermark {
    position: absolute;
    right: 119px;
    bottom: 72px;
    display: flex;
    flex-direction: column;
    color: rgba(255, 255, 255, 0.42);
    font-family: "Open Sans", "Noto Sans CJK KR", sans-serif;
    font-size: 32px;
    font-weight: 300;
    line-height: 42px;
}
.watermark strong {
    font-size: 43px;
    font-weight: 300;
    line-height: 50px;
}

/* taskbar */
.taskbar {
    display: flex;
    height: 80px;
    background: linear-gradient(to right, #031b24, #02131f 50%, #000a1c 80%);
    color: #e8eaec;
    font-family: "Open Sans", "Noto Sans CJK KR", sans-serif;
}
.start {
    width: 96px;
}
.search {
    display: flex;
    align-items: center;
    gap: 22px;
    width: 688px;
    padding-left: 24px;
    background-color: #f2f2f2;
    font-size: 32px;
}
.search input {
    flex: 1;
}
.search input::placeholder {
    color: #4a4a4a;
}
.app {
    width: 98px;
    border-bottom: 4px solid transparent;
}
.taskview {
    width: 101px;
    padding-right: 4px;
}
.open {
    width: 80px;
    margin: 0 9px;
    border-color: #86bff0;
}
.open.active {
    width: 98px;
    margin: 0;
    background-color: #33454f;
}
.tray {
    display: flex;
    align-items: center;
    margin-left: auto;
    margin-right: 8px;
    border-right: 2px solid #4a5261;
}
.tray button {
    width: 49px;
}
.tray svg {
    fill: none;
    stroke: #e8eaec;
    stroke-width: 2;
}
.tray time {
    width: 150px;
    text-align: center;
    font-size: 25px;
    line-height: 36px;
}
.tray .notify {
    position: relative;
    width: 102px;
    height: 52px;
    padding-right: 6px;
}
.notify span {
    position: absolute;
    left: 46px;
    top: 22px;
    width: 34px;
    height: 34px;
    border: 2px solid #6b6f77;
    border-radius: 50%;
    background-color: #26292f;
    font-size: 22px;
    font-weight: 700;
    line-height: 30px;
}
```
